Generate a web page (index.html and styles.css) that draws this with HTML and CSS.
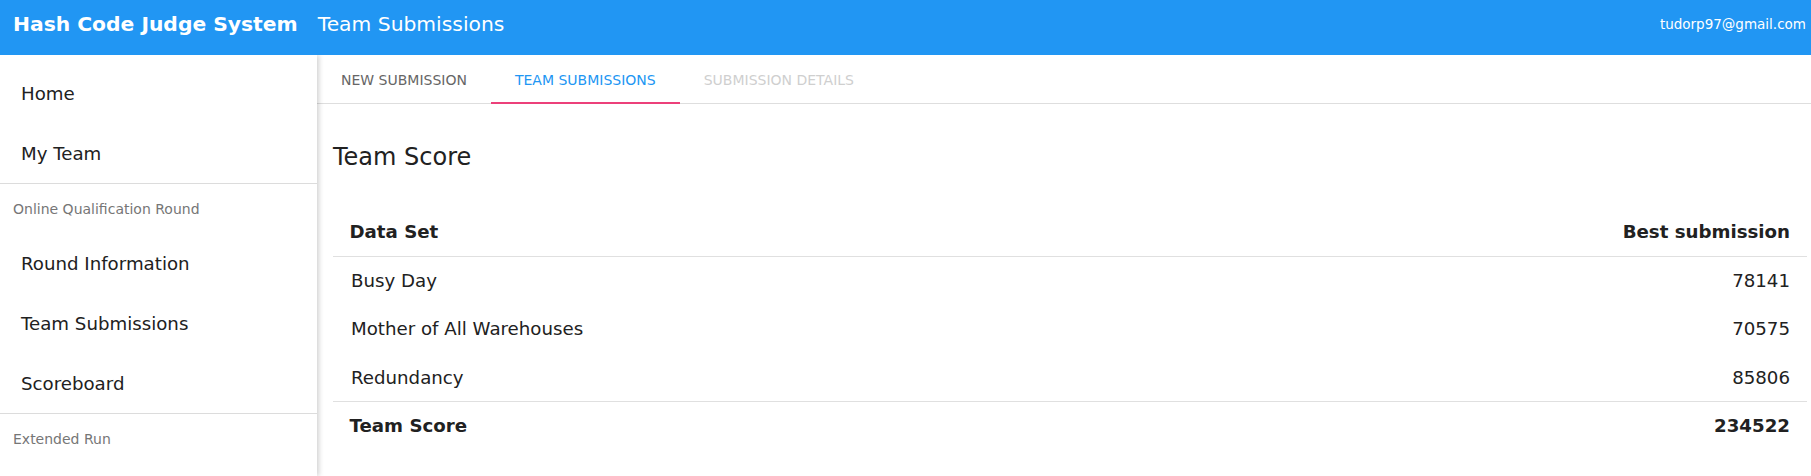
FILE: index.html
```html
<!DOCTYPE html>
<html lang="en">
<head>
<meta charset="utf-8">
<title>Team Submissions</title>
<link rel="stylesheet" href="styles.css">
</head>
<body>
<header class="appbar">
  <span class="app-title">Hash Code Judge System</span>
  <span class="page-title">Team Submissions</span>
  <span class="user-email">tudorp97@gmail.com</span>
</header>
<div class="layout">
  <nav class="sidebar">
    <div class="nav-item">Home</div>
    <div class="nav-item">My Team</div>
    <div class="divider"></div>
    <div class="subheader">Online Qualification Round</div>
    <div class="nav-item">Round Information</div>
    <div class="nav-item">Team Submissions</div>
    <div class="nav-item">Scoreboard</div>
    <div class="divider"></div>
    <div class="subheader">Extended Run</div>
  </nav>
  <main class="main">
    <div class="tabs">
      <div class="tab">New Submission</div>
      <div class="tab tab-active">Team Submissions</div>
      <div class="tab tab-disabled">Submission Details</div>
    </div>
    <section class="content">
      <h2 class="section-title">Team Score</h2>
      <table class="score-table">
        <thead>
          <tr><th class="col-name">Data Set</th><th class="col-num">Best submission</th></tr>
        </thead>
        <tbody>
          <tr><td class="col-name">Busy Day</td><td class="col-num">78141</td></tr>
          <tr><td class="col-name">Mother of All Warehouses</td><td class="col-num">70575</td></tr>
          <tr><td class="col-name">Redundancy</td><td class="col-num">85806</td></tr>
        </tbody>
        <tfoot>
          <tr><th class="col-name">Team Score</th><th class="col-num">234522</th></tr>
        </tfoot>
      </table>
    </section>
  </main>
</div>
</body>
</html>
```
FILE: styles.css
```css
* { box-sizing: border-box; }
html, body { margin: 0; padding: 0; background: #fff; }
body {
  font-family: "DejaVu Sans", "Noto Sans", sans-serif;
  color: #212121;
  width: 1811px;
  height: 476px;
  overflow: hidden;
}
.appbar {
  height: 55px;
  background: #2196f3;
  color: #fff;
  display: flex;
  align-items: center;
  padding: 0 5px 7px 13px;
  position: relative;
  z-index: 2;
}
.app-title { font-weight: bold; font-size: 20.3px; }
.page-title { font-size: 20.3px; margin-left: 20px; }
.user-email { font-size: 13.5px; margin-left: auto; }
.layout { display: flex; height: 421px; }
.sidebar {
  width: 317px;
  flex: none;
  padding-top: 8px;
  box-shadow: 2px 0 5px rgba(0,0,0,0.18);
  position: relative;
  z-index: 1;
  background: #fff;
}
.nav-item {
  height: 60px;
  display: flex;
  align-items: center;
  padding-left: 21px;
  font-size: 18.2px;
  color: #212121;
}
.divider { height: 1px; background: #dcdcdc; }
.subheader {
  height: 49px;
  display: flex;
  align-items: center;
  padding-left: 13px;
  padding-top: 1px;
  font-size: 14px;
  color: #767676;
}
.main { flex: 1; min-width: 0; }
.tabs {
  display: flex;
  height: 49px;
  border-bottom: 1px solid #dedede;
}
.tab {
  padding: 0 24px;
  display: flex;
  align-items: center;
  font-size: 14px;
  text-transform: uppercase;
  color: #666;
  border-bottom: 2px solid transparent;
  margin-bottom: -1px;
  padding-top: 2px;
}
.tab-active { color: #2196f3; border-bottom-color: #ec407a; }
.tab-disabled { color: #cfcfcf; }
.content { padding: 0 4px 0 16px; }
.section-title {
  margin: 0;
  padding-top: 39px;
  font-size: 24px;
  font-weight: normal;
  line-height: 28px;
  color: #212121;
}
.score-table {
  width: 100%;
  border-collapse: collapse;
  margin-top: 37px;
  font-size: 18.2px;
}
.score-table th, .score-table td {
  height: 48px;
  padding: 0 17px 0 16.5px;
  vertical-align: middle;
}
.score-table tbody td { height: 48.6px; }
.score-table tbody td.col-name { padding-left: 18px; }
.score-table tfoot th { height: 47px; }
.score-table th { font-weight: bold; }
.col-name { text-align: left; }
.col-num { text-align: right; }
.score-table thead tr { border-bottom: 1px solid #e0e0e0; }
.score-table tfoot tr { border-top: 1px solid #e0e0e0; }
```
